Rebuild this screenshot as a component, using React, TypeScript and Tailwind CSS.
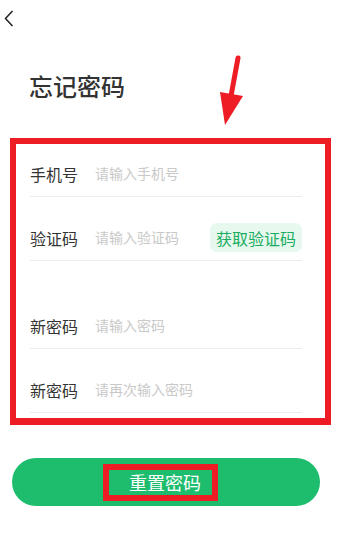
import React from "react";

const Row = ({
  label,
  placeholder,
  className,
  action,
}: {
  label: string;
  placeholder: string;
  className: string;
  action?: React.ReactNode;
}) => {
  return (
    <div className={`flex items-center h-[46px] border-b border-[#ededed] ${className}`}>
      <span className="w-[65px] text-[16px] text-[#333]">{label}</span>
      <span className="flex-1 text-[14px] text-[#c9c9c9]">{placeholder}</span>
      {action}
    </div>
  );
};

const App = () => {
  return (
    <div className="relative w-[339px] h-[554px] bg-white font-['Noto_Sans_CJK_SC',sans-serif] overflow-hidden">
      <div className="pt-[10px] pl-[4px]">
        <svg width="10" height="17" viewBox="0 0 10 17" fill="none">
          <path d="M8.5 1 L1.5 8.5 L8.5 16" stroke="#222" strokeWidth="1.5" />
        </svg>
      </div>

      <h1 className="mt-[46px] ml-[29px] text-[24px] leading-[26px] font-medium text-[#333]">忘记密码</h1>

      <div className="mt-[39px] ml-[10px] w-[321px] border-[6px] border-b-[7px] border-[#ee1c25] pl-[14px] pr-[23px] pb-[5px]">
        <Row label="手机号" placeholder="请输入手机号" className="mt-[7px]" />
        <Row
          label="验证码"
          placeholder="请输入验证码"
          className="mt-[18px]"
          action={
            <span className="flex items-center justify-center w-[92px] h-[29px] rounded-[7px] bg-[#e7f8ee] text-[16px] text-[#1aad5f]">
              获取验证码
            </span>
          }
        />
        <Row label="新密码" placeholder="请输入密码" className="mt-[42px]" />
        <Row label="新密码" placeholder="请再次输入密码" className="mt-[18px]" />
      </div>

      <div className="mt-[33px] ml-[12px] w-[308px] h-[48px] rounded-full bg-[#1ebd6e] flex items-center pl-[91px]">
        <span className="w-[115px] h-[37px] border-[6px] border-[#ee1c25] flex items-center pl-[20px] text-[18px] text-white">
          重置密码
        </span>
      </div>

      <svg className="absolute left-0 top-0" width="339" height="554" viewBox="0 0 339 554">
        <line x1="238" y1="58" x2="231" y2="96" stroke="#ee1c25" strokeWidth="5" strokeLinecap="round" />
        <polygon points="220,92 243,96 225,125" fill="#ee1c25" />
      </svg>
    </div>
  );
};

export default App;
